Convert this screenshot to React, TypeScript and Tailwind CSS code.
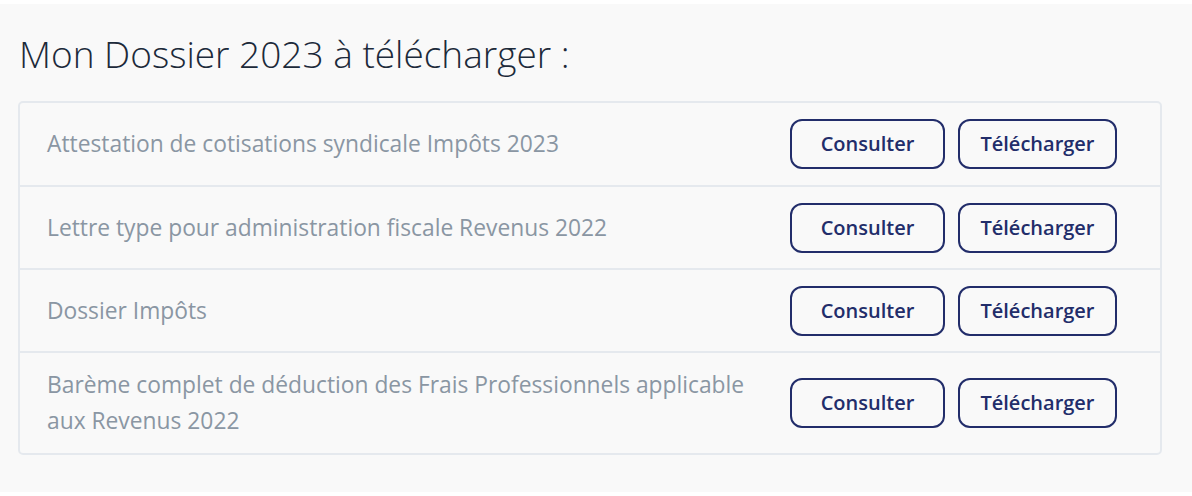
import React from "react";

const rows: string[] = [
  "Attestation de cotisations syndicale Impôts 2023",
  "Lettre type pour administration fiscale Revenus 2022",
  "Dossier Impôts",
  "Barème complet de déduction des Frais Professionnels applicable aux Revenus 2022",
];

export default function App() {
  return (
    <div className="w-[1192px] h-[496px] bg-white pt-[4px]" style={{ fontFamily: '"Open Sans", "Noto Sans", sans-serif' }}>
      <div className="h-[488px] bg-[#f9f9f9] pl-[18px] pr-[30px] pt-[28px]">
        <h1 className="text-[37px] leading-[44px] font-light text-[#1c2a3a] pl-[1px]">
          Mon Dossier 2023 à télécharger :
        </h1>
        <div className="mt-[25px] border-2 border-[#e5e9ee] rounded-[5px]">
          {rows.map((r, i) => (
            <div
              key={i}
              className={`flex items-center pl-[27px] pr-[43px] py-[14px] ${i > 0 ? "min-h-[83px] border-t-2 border-[#e5e9ee]" : "min-h-[82px]"}`}
            >
              <div className="flex-1 pr-[30px] text-[22.8px] leading-[36px] text-[#8a96a3]">
                <span className="block max-w-[720px]">{r}</span>
              </div>
              <div className="flex gap-[13px] shrink-0">
                <button className="w-[155px] h-[50px] border-2 border-[#222d6a] rounded-[12px] text-[20px] font-semibold text-[#222d6a] bg-transparent">
                  Consulter
                </button>
                <button className="w-[159px] h-[50px] border-2 border-[#222d6a] rounded-[12px] text-[20px] font-semibold text-[#222d6a] bg-transparent">
                  Télécharger
                </button>
              </div>
            </div>
          ))}
        </div>
      </div>
    </div>
  );
}
